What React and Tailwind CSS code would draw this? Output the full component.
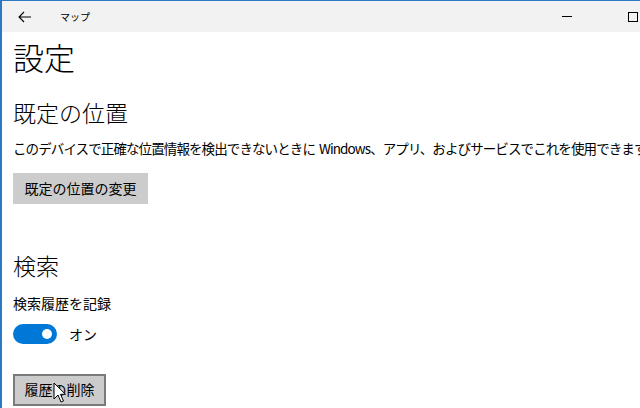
import React from 'react';

const font = { fontFamily: '"Noto Sans CJK JP", "Noto Sans", sans-serif' };

const Cursor = () => (
  <svg width="14" height="22" viewBox="0 0 14 22" className="absolute left-[40px] top-[8px]">
    <path d="M1 1 L1 17 L5 13 L8 20 L10.5 19 L7.5 12.3 L12.5 12.3 Z" fill="#fff" stroke="#000" strokeWidth="1" strokeLinejoin="round" />
  </svg>
);

const App = () => {
  return (
    <div className="w-[640px] h-[408px] overflow-hidden bg-white border-l-2 border-t border-[#2b79c2] text-black" style={font}>
      <div className="h-[31px] bg-[#f2f2f2] flex items-center">
        <div className="w-[46px] flex justify-center">
          <svg width="14" height="12" viewBox="0 0 14 12">
            <path d="M6 1 L1 6 L6 11 M1 6 L13 6" fill="none" stroke="#000" strokeWidth="1.1" />
          </svg>
        </div>
        <span className="ml-[12px] text-[10px] leading-none">マップ</span>
        <div className="ml-auto flex items-center h-full">
          <div className="w-[46px] flex justify-center">
            <div className="w-[10px] h-px bg-black" />
          </div>
          <div className="w-[50px] flex justify-end pr-[2px]">
            <div className="w-[10px] h-[10px] border border-black" />
          </div>
        </div>
      </div>
      <div className="pl-[11px]">
        <div className="text-[31px] font-light leading-none mt-[9px] h-[36px]">設定</div>
        <div className="text-[23px] font-light leading-none mt-[24px]">既定の位置</div>
        <div className="text-[13.5px] leading-none mt-[18px] whitespace-nowrap tracking-[-0.9px]">
          このデバイスで正確な位置情報を検出できないときに<span className="ml-[4px]">Windows</span>、アプリ、およびサービスでこれを使用できます。
        </div>
        <button className="mt-[17px] w-[135px] h-[31px] bg-[#cccccc] text-[14px] flex items-center justify-center">
          既定の位置の変更
        </button>
        <div className="text-[23px] font-light leading-none mt-[50px]">検索</div>
        <div className="text-[14px] leading-none mt-[19px]">検索履歴を記録</div>
        <div className="flex items-center mt-[14px]">
          <div className="w-[44px] h-[20px] rounded-full bg-[#0078d7] flex items-center justify-end pr-[5px]">
            <div className="w-[10px] h-[10px] rounded-full bg-white" />
          </div>
          <span className="ml-[12px] text-[14px] leading-none">オン</span>
        </div>
        <div className="relative mt-[30px] w-[93px]">
          <button className="w-[93px] h-[32px] bg-[#cccccc] border-2 border-[#7a7a7a] text-[14px] flex items-center justify-center">
            履歴の削除
          </button>
          <Cursor />
        </div>
      </div>
    </div>
  );
};

export default App;
